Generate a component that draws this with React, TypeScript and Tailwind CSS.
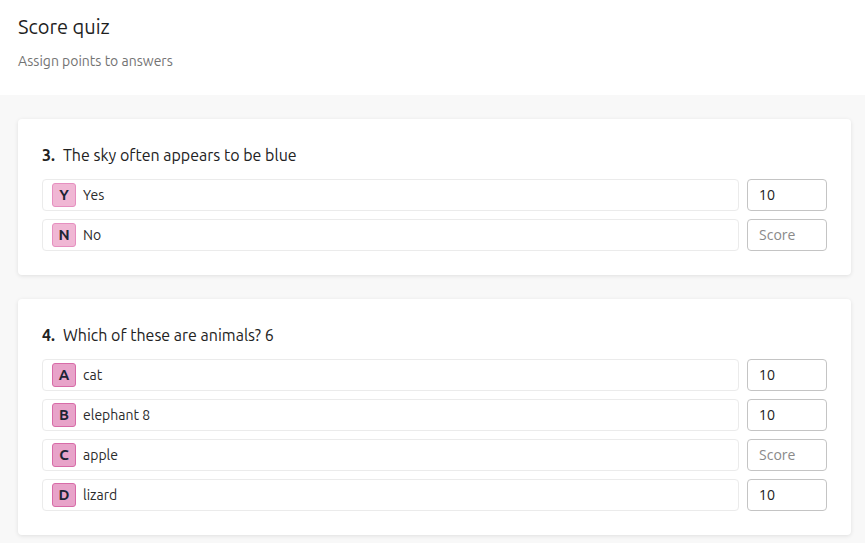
import { useState } from 'react';

// ── Types ──────────────────────────────────────────────────────────────────

interface Answer {
  key:   string;
  text:  string;
  score: string;
}

interface Question {
  num:     number;
  title:   string;
  tone:    'light' | 'deep';
  answers: Answer[];
}

// ── Data ───────────────────────────────────────────────────────────────────

const QUESTIONS: Question[] = [
  {
    num: 3,
    title: 'The sky often appears to be blue',
    tone: 'light',
    answers: [
      { key: 'Y', text: 'Yes', score: '10' },
      { key: 'N', text: 'No',  score: ''   },
    ],
  },
  {
    num: 4,
    title: 'Which of these are animals? 6',
    tone: 'deep',
    answers: [
      { key: 'A', text: 'cat',        score: '10' },
      { key: 'B', text: 'elephant 8', score: '10' },
      { key: 'C', text: 'apple',      score: ''   },
      { key: 'D', text: 'lizard',     score: '10' },
    ],
  },
];

// ── Answer row ─────────────────────────────────────────────────────────────

function AnswerRow({ answer, tone }: { answer: Answer; tone: Question['tone'] }) {
  const [score, setScore] = useState(answer.score);

  return (
    <div className="flex items-center gap-2">
      <div className="flex-1 h-8 flex items-center gap-[7px] pl-[9px] rounded border border-[#ebebeb] bg-white">
        {tone === 'light' ? (
          <span className="w-6 h-6 flex items-center justify-center rounded-[3px] border border-[#e68fc0] bg-[#f0b7d4] text-[15px] font-bold text-[#1e2535]">
            {answer.key}
          </span>
        ) : (
          <span className="w-6 h-6 flex items-center justify-center rounded-[3px] border border-[#d86ba8] bg-[#e8a3c9] text-[15px] font-bold text-[#1e2535]">
            {answer.key}
          </span>
        )}
        <span className="text-[14px] text-[#2b2b2b]">{answer.text}</span>
      </div>
      <input
        value={score}
        onChange={(e) => setScore(e.target.value)}
        placeholder="Score"
        className="w-20 h-8 pl-[11px] pr-2 pb-[1px] rounded border border-[#c4c4c4] bg-white text-[14px] text-[#222] placeholder:text-[#8a8a8a] outline-none font-['Open_Sans',sans-serif]"
      />
    </div>
  );
}

// ── Question card ──────────────────────────────────────────────────────────

function QuestionCard({ q }: { q: Question }) {
  return (
    <section className="bg-white rounded px-6 py-6 shadow-[0_1px_4px_rgba(0,0,0,0.1)]">
      <h2 className="flex items-center h-6 mb-3 text-[16px] text-[#222]">
        <span className="font-bold mr-2">{q.num}.</span>
        {q.title}
      </h2>
      <div className="flex flex-col gap-2">
        {q.answers.map((a) => (
          <AnswerRow key={a.key} answer={a} tone={q.tone} />
        ))}
      </div>
    </section>
  );
}

// ── App ────────────────────────────────────────────────────────────────────

export default function App() {
  return (
    <div className="min-h-screen bg-[#f8f8f8] font-['Ubuntu','Noto_Sans',sans-serif]">
      <header className="bg-white h-[95px] px-[18px] pt-[14px]">
        <h1 className="text-[20px] leading-[26px] text-[#1f1f1f]">Score quiz</h1>
        <p className="mt-[11px] text-[14px] text-[#737373]">Assign points to answers</p>
      </header>

      <main className="flex flex-col gap-6 px-[18px] pt-6 pb-6 -mr-[4px]">
        {QUESTIONS.map((q) => (
          <QuestionCard key={q.num} q={q} />
        ))}
      </main>
    </div>
  );
}
